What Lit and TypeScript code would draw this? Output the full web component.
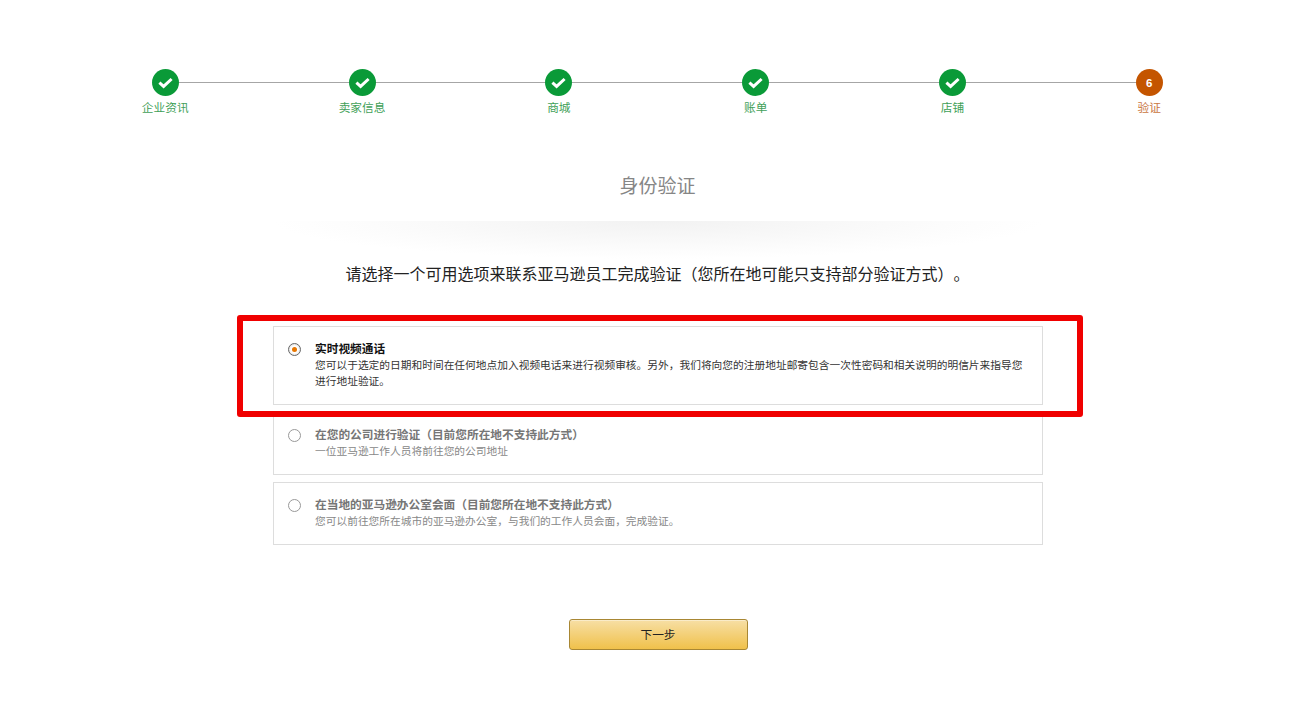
import { LitElement, html, css, svg } from "lit";
import { customElement } from "lit/decorators.js";

const steps = ["企业资讯", "卖家信息", "商城", "账单", "店铺", "验证"];
const options = [
  {
    title: "实时视频通话",
    desc: "您可以于选定的日期和时间在任何地点加入视频电话来进行视频审核。另外，我们将向您的注册地址邮寄包含一次性密码和相关说明的明信片来指导您进行地址验证。",
    selected: true,
  },
  {
    title: "在您的公司进行验证（目前您所在地不支持此方式）",
    desc: "一位亚马逊工作人员将前往您的公司地址",
    selected: false,
  },
  {
    title: "在当地的亚马逊办公室会面（目前您所在地不支持此方式）",
    desc: "您可以前往您所在城市的亚马逊办公室，与我们的工作人员会面，完成验证。",
    selected: false,
  },
];

const check = svg`<svg class="check" viewBox="0 0 27 27" width="27" height="27"><path d="M7.4 13.6l4.2 3.8 8-7.4" fill="none" stroke="#fff" stroke-width="3"/></svg>`;

@customElement("app-root")
export class AppRoot extends LitElement {
  static styles = css`
    :host {
      display: block;
      height: 715px;
      overflow: hidden;
      background: #fff;
      font-family: "Noto Sans CJK SC", "Liberation Sans", sans-serif;
      color: #111;
      text-spacing-trim: space-all;
    }
    .page {
      display: flex;
      flex-direction: column;
      align-items: center;
      padding: 69px 0 0 13px;
    }
    .stepper {
      position: relative;
      display: flex;
      justify-content: space-between;
      width: 1032px;
      margin-left: -0.5px;
    }
    .line {
      position: absolute;
      left: 24px;
      right: 24px;
      top: 13px;
      height: 1px;
      background: #a6a6a6;
    }
    .step {
      position: relative;
      width: 48px;
      display: flex;
      flex-direction: column;
      align-items: center;
      color: #3f9f58;
      font-size: 11.7px;
      line-height: 16px;
    }
    .dot {
      width: 27px;
      height: 27px;
      border-radius: 50%;
      background: #0a9a38;
      display: flex;
      align-items: center;
      justify-content: center;
      margin-bottom: 3px;
    }
    .check {
      display: block;
    }
    .step.current {
      color: #c9763f;
    }
    .step.current .dot {
      background: #c45500;
      color: #fff;
      font: bold 11.5px "Liberation Sans", sans-serif;
    }
    h1 {
      margin: 57px 0 0;
      font-size: 19px;
      line-height: 26px;
      font-weight: 400;
      color: #868686;
    }
    .divider {
      width: 770px;
      height: 38px;
      margin-top: 23px;
      background: radial-gradient(ellipse 50% 100% at 50% 0, #f2f2f2 0, #f8f8f8 45%, #fcfcfc 75%, #fff 100%);
    }
    .intro {
      margin: 2px 0 0;
      font-size: 16px;
      line-height: 24px;
      font-weight: 400;
      color: #222;
    }
    .options {
      position: relative;
      width: 770px;
      margin-top: 41px;
      display: flex;
      flex-direction: column;
      gap: 7.5px;
    }
    .card {
      box-sizing: border-box;
      border: 1px solid #ddd;
      padding: 13px 14px 14.5px;
      display: flex;
      gap: 14.5px;
      min-height: 62.5px;
    }
    .radio {
      box-sizing: border-box;
      flex: none;
      width: 13px;
      height: 13px;
      margin-top: 3px;
      border-radius: 50%;
      border: 1px solid #999;
      background: #fff;
      display: flex;
      align-items: center;
      justify-content: center;
    }
    .radio.on {
      border-color: #666;
      box-shadow: inset 0 0 2px #bbb;
    }
    .radio.on::after {
      content: "";
      width: 5px;
      height: 5px;
      border-radius: 50%;
      background: #e77600;
    }
    .text {
      flex: 1;
      min-width: 0;
    }
    .title {
      font-size: 11.7px;
      line-height: 16px;
      margin-bottom: 1px;
      font-weight: 700;
      color: #111;
    }
    .desc {
      font-size: 10.73px;
      line-height: 16px;
      color: #333;
    }
    .card.off .title {
      color: #767676;
    }
    .card.off .desc {
      color: #888;
    }
    .mark {
      position: absolute;
      left: -36px;
      top: -11px;
      width: 846px;
      height: 102px;
      box-sizing: border-box;
      border: 6px solid #f00000;
      border-radius: 3px;
      pointer-events: none;
    }
    button {
      margin: 74.5px 0 0 1px;
      width: 179px;
      height: 31px;
      border: 1px solid #a88734;
      border-radius: 3px;
      background: linear-gradient(to bottom, #f7dfa5, #f0c14b);
      color: #222;
      font: 11.7px "Noto Sans CJK SC", sans-serif;
      padding: 0 0 3px;
      box-shadow: inset 0 1px 0 rgba(255, 255, 255, 0.4);
    }
  `;

  render() {
    return html`
      <div class="page">
        <div class="stepper">
          <div class="line"></div>
          ${steps.map((s, i) =>
            i < 5
              ? html`<div class="step"><div class="dot">${check}</div>${s}</div>`
              : html`<div class="step current"><div class="dot">6</div>${s}</div>`
          )}
        </div>
        <h1>身份验证</h1>
        <div class="divider"></div>
        <p class="intro">请选择一个可用选项来联系亚马逊员工完成验证（您所在地可能只支持部分验证方式）。</p>
        <div class="options">
          ${options.map(
            (o) => html`
              <div class="card ${o.selected ? "" : "off"}">
                <div class="radio ${o.selected ? "on" : ""}"></div>
                <div class="text">
                  <div class="title">${o.title}</div>
                  <div class="desc">${o.desc}</div>
                </div>
              </div>
            `
          )}
          <div class="mark"></div>
        </div>
        <button>下一步</button>
      </div>
    `;
  }
}
